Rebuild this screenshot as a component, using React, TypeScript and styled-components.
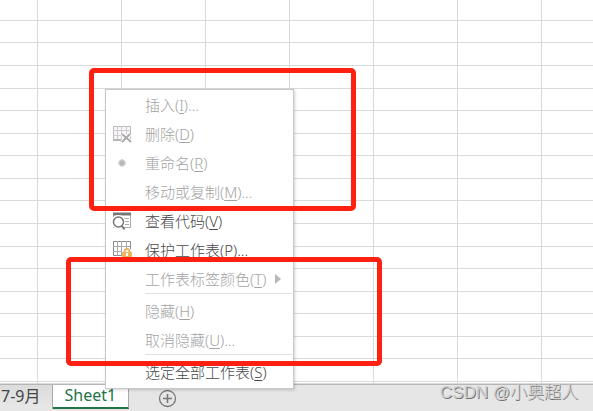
import React from "react";
import styled, { createGlobalStyle, css } from "styled-components";

const GlobalStyle = createGlobalStyle`
  *, *::before, *::after { box-sizing: border-box; }
  body {
    margin: 0;
    overflow: hidden;
    background: #fff;
    font-family: "Noto Sans", "Noto Sans CJK SC", sans-serif;
  }
`;

const Workbook = styled.main`
  position: relative;
  display: flex;
  flex-direction: column;
  min-height: 100vh;
  overflow: hidden;
  background: #e6e6e6;
`;

const Cells = styled.table`
  width: 626px;
  border-collapse: separate;
  border-spacing: 0;
  table-layout: fixed;
  background: #fff;
`;

const FirstColumn = styled.col`
  width: 38px;
`;

const Column = styled.col`
  width: 84px;
`;

const SheetRow = styled.tr<{ $height: number }>`
  height: ${(p) => p.$height}px;
`;

const Cell = styled.td`
  padding: 0;
  border-right: 1px solid #dadada;
  border-bottom: 1px solid #dadada;
`;

const TabBar = styled.nav`
  display: flex;
  align-items: flex-start;
  flex: 1;
  border-top: 1px solid #b5b5b5;
  background: #e6e6e6;
`;

const SheetTab = styled.button<{ $active?: boolean }>`
  height: 24px;
  padding: 0 12px 3px 1px;
  border: 0;
  border-right: 1px solid #a8a8a8;
  background: linear-gradient(#dcdcdc, #e8e8e8);
  color: #444;
  font: 16px/20px "Noto Sans", "Noto Sans CJK SC", sans-serif;
  white-space: nowrap;
  ${(p) =>
    p.$active &&
    css`
      padding: 0 12px 3px 11px;
      border-bottom: 2px solid #217346;
      background: #fff;
      color: #217346;
    `}
`;

const AddSheet = styled.button`
  display: flex;
  margin: 4px 0 0 29px;
  padding: 0;
  border: 0;
  background: none;
`;

const Menu = styled.div`
  position: absolute;
  top: 89px;
  left: 105px;
  width: 189px;
  padding: 0 0 2px;
  border: 1px solid #c8c8c8;
  background: #fff;
  box-shadow: 1px 1px 3px rgba(0, 0, 0, 0.18);
`;

const MenuItem = styled.button`
  display: grid;
  grid-template-columns: 39px 1fr 18px;
  align-items: center;
  width: 100%;
  height: 29px;
  padding: 0;
  border: 0;
  background: none;
  color: #484848;
  font: 300 15px/20px "Noto Sans", "Noto Sans CJK SC", sans-serif;
  text-align: left;
  white-space: nowrap;
  &:disabled {
    color: #a4a4a4;
  }
`;

const IconSlot = styled.span`
  display: flex;
  padding-left: 6px;
`;

const AccessKey = styled.span`
  text-decoration: underline;
  text-decoration-thickness: 1px;
  text-underline-offset: 2px;
`;

const Separator = styled.hr`
  height: 1px;
  margin: 0 1px 2px 39px;
  border: 0;
  background: #e0e0e0;
`;

const Highlight = styled.div`
  position: absolute;
  border: 5px solid #ff2012;
  border-radius: 5px;
  pointer-events: none;
`;

const UpperHighlight = styled(Highlight)`
  top: 68px;
  left: 89px;
  width: 267px;
  height: 143px;
`;

const LowerHighlight = styled(Highlight)`
  top: 257px;
  left: 66px;
  width: 316px;
  height: 109px;
`;

const Watermark = styled.span`
  position: absolute;
  right: 15px;
  bottom: 6px;
  color: #d0d0d0;
  font: 300 17px/24px "Liberation Sans", "Noto Sans CJK SC", sans-serif;
  text-shadow: 1px 1px 0 #757575;
  white-space: nowrap;
`;

const DeleteIcon = () => (
  <svg width="21" height="20" viewBox="0 0 21 20" fill="none">
    <path d="M1.5 2.5h17v13h-17z" fill="#f8f5f8" stroke="#bdb8bd" />
    <path d="M5.5 2v13M9.5 2v13M14.5 2v11M1 6.5h17M1 11.5h13" stroke="#d2ccd2" />
    <path d="M1 16h7l2 1" stroke="#b5b5b5" strokeWidth="2" />
    <path d="m10 10 9 8M18 10l-8 8" stroke="#fff" strokeWidth="4" />
    <path d="m10 10 9 8M18 10l-8 8" stroke="#aaa" strokeWidth="2" />
  </svg>
);

const RenameIcon = () => (
  <svg width="21" height="20" viewBox="0 0 21 20" fill="#cacaca">
    <path d="M8 7l2-1 2 1 1 1 1 2-1 2-1 1-2 1-2-1-1-1-1-2 1-2z" />
    <path d="M8 8h4v4H8z" fill="#b8b8b8" />
  </svg>
);

const CodeIcon = () => (
  <svg width="21" height="20" viewBox="0 0 21 20" fill="none">
    <path d="M1.5 2.5h17v14h-17z" fill="#fff" stroke="#aaa" />
    <path d="M1 3h18" stroke="#777" strokeWidth="3" />
    <path d="M12 7.5h5M13 10.5h4M13 13.5h4" stroke="#aaa" />
    <circle cx="6.5" cy="11" r="5.5" fill="#fff" stroke="#fff" strokeWidth="3" />
    <circle cx="6.5" cy="11" r="5" fill="#fff" stroke="#777" strokeWidth="1.5" />
    <path d="m9.5 14.5 3 4" stroke="#777" strokeWidth="2" />
  </svg>
);

const ProtectIcon = () => (
  <svg width="21" height="20" viewBox="0 0 21 20" fill="none">
    <path d="M1.5 1.5h17v14h-17z" fill="#fff" stroke="#8a8a8a" />
    <path d="M5.5 1v15M9.5 1v15M14.5 1v9M1 6.5h17M1 11.5h12" stroke="#aaa" />
    <path d="M10 9h10v10H10z" fill="#fff" />
    <path d="M12.5 13v-1q0-3 2.5-3t2.5 3v1" stroke="#e8b569" strokeWidth="2" />
    <path d="M10 12h10v7H10z" fill="#edb65c" />
    <path d="M15 13v3" stroke="#fff" strokeWidth="2" />
  </svg>
);

const SubmenuArrow = () => (
  <svg width="6" height="10" viewBox="0 0 6 10">
    <path d="M0 0v10l6-5z" fill="#b8b8b8" />
  </svg>
);

type Entry = {
  label: string;
  accessKey: string;
  more?: boolean;
  enabled?: boolean;
  icon?: React.ReactNode;
  submenu?: boolean;
  separated?: boolean;
};

const entries: Entry[] = [
  { label: "插入", accessKey: "I", more: true },
  { label: "删除", accessKey: "D", icon: <DeleteIcon /> },
  { label: "重命名", accessKey: "R", icon: <RenameIcon /> },
  { label: "移动或复制", accessKey: "M", more: true },
  { label: "查看代码", accessKey: "V", enabled: true, icon: <CodeIcon /> },
  { label: "保护工作表", accessKey: "P", more: true, enabled: true, icon: <ProtectIcon /> },
  { label: "工作表标签颜色", accessKey: "T", submenu: true },
  { label: "隐藏", accessKey: "H", separated: true },
  { label: "取消隐藏", accessKey: "U", more: true },
  { label: "选定全部工作表", accessKey: "S", enabled: true, separated: true },
];

const rowHeights = [21, 22, 23, 23, 22, 23, 22, 23, 22, 23, 23, 22, 23, 22, 23, 22, 23, 2];
const columns = [0, 1, 2, 3, 4, 5, 6];

export default function App() {
  return (
    <Workbook>
      <GlobalStyle />
      <Cells>
        <colgroup>
          <FirstColumn />
          {columns.map((c) => (
            <Column key={c} />
          ))}
        </colgroup>
        <tbody>
          {rowHeights.map((height, row) => (
            <SheetRow key={row} $height={height}>
              <Cell />
              {columns.map((c) => (
                <Cell key={c} />
              ))}
            </SheetRow>
          ))}
        </tbody>
      </Cells>
      <TabBar aria-label="工作表">
        <SheetTab>7-9月</SheetTab>
        <SheetTab $active>Sheet1</SheetTab>
        <AddSheet aria-label="新工作表">
          <svg width="19" height="19" viewBox="0 0 19 19" fill="none" stroke="#777">
            <circle cx="9.5" cy="9.5" r="8" strokeWidth="1.3" />
            <path d="M9.5 5v9M5 9.5h9" strokeWidth="1.6" />
          </svg>
        </AddSheet>
      </TabBar>
      <Menu role="menu">
        {entries.map((e) => (
          <React.Fragment key={e.label}>
            {e.separated && <Separator />}
            <MenuItem role="menuitem" disabled={!e.enabled}>
              <IconSlot>{e.icon}</IconSlot>
              <span>
                {e.label}(<AccessKey>{e.accessKey}</AccessKey>){e.more && "..."}
              </span>
              {e.submenu && <SubmenuArrow />}
            </MenuItem>
          </React.Fragment>
        ))}
      </Menu>
      <UpperHighlight />
      <LowerHighlight />
      <Watermark>CSDN @小奥超人</Watermark>
    </Workbook>
  );
}
